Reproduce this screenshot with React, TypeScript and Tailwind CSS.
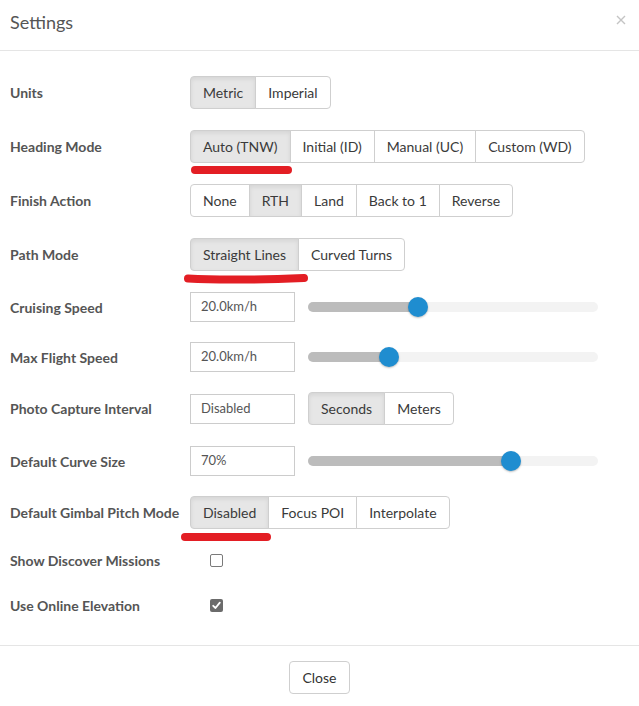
import React from "react";

const font = { fontFamily: "Lato, 'Open Sans', Arial, sans-serif" };

function Group({ items, active }: { items: string[]; active: number }) {
  return (
    <div className="flex h-[33px]">
      {items.map((item, i) => (
        <div
          key={item}
          className={`flex items-center px-3 border border-[#cfcfcf] text-[14px] text-[#3a3a3a] ${
            i > 0 ? "-ml-px" : ""
          } ${i === 0 ? "rounded-l-[4px]" : ""} ${i === items.length - 1 ? "rounded-r-[4px]" : ""} ${
            i === active ? "bg-[#e6e6e6] border-[#c2c2c2] shadow-[inset_0_2px_4px_rgba(0,0,0,0.08)] z-10" : "bg-white"
          }`}
        >
          {item}
        </div>
      ))}
    </div>
  );
}

function Field({ value }: { value: string }) {
  return (
    <div className="w-[105px] h-[30px] border border-[#cccccc] flex items-center pl-[10px] text-[13px] text-[#555] bg-white">
      {value}
    </div>
  );
}

function Slider({ pct }: { pct: number }) {
  return (
    <div className="relative w-[290px] h-[10px] rounded-full bg-[#f3f3f3] ml-[13px]">
      <div className="absolute left-0 top-0 h-full rounded-full bg-[#bcbcbc]" style={{ width: `${pct}%` }} />
      <div
        className="absolute top-1/2 w-[20px] h-[20px] -ml-[10px] -translate-y-1/2 rounded-full bg-[#1f8dd0] shadow-[0_1px_2px_rgba(0,0,0,0.25)]"
        style={{ left: `${pct}%` }}
      />
    </div>
  );
}

function Row({ label, className, children }: { label: string; className: string; children: React.ReactNode }) {
  return (
    <div className={`flex items-center ${className}`}>
      <div className="w-[190px] shrink-0 pl-[10px] text-[14px] font-bold text-[#555] whitespace-nowrap">{label}</div>
      <div className="flex items-center">{children}</div>
    </div>
  );
}

export default function App() {
  return (
    <div className="relative w-[639px] h-[706px] bg-white overflow-hidden" style={font}>
      {/* header */}
      <div className="h-[51px] border-b border-[#e5e5e5] flex items-center justify-between pl-[10px] pr-[13px]">
        <span className="text-[18px] text-[#555] -mt-[6px]">Settings</span>
        <svg width="10" height="10" viewBox="0 0 10 10" className="-mt-[10px]">
          <path d="M1 1L9 9M9 1L1 9" stroke="#c4c4c4" strokeWidth="1.4" />
        </svg>
      </div>

      {/* body */}
      <div className="pt-[25px] h-[595px] border-b border-[#e5e5e5]">
        <Row label="Units" className="h-[33px]">
          <Group items={["Metric", "Imperial"]} active={0} />
        </Row>
        <Row label="Heading Mode" className="h-[33px] mt-[21px]">
          <Group items={["Auto (TNW)", "Initial (ID)", "Manual (UC)", "Custom (WD)"]} active={0} />
        </Row>
        <Row label="Finish Action" className="h-[33px] mt-[21px]">
          <Group items={["None", "RTH", "Land", "Back to 1", "Reverse"]} active={1} />
        </Row>
        <Row label="Path Mode" className="h-[33px] mt-[21px]">
          <Group items={["Straight Lines", "Curved Turns"]} active={0} />
        </Row>
        <Row label="Cruising Speed" className="h-[30px] mt-[21px]">
          <Field value="20.0km/h" />
          <Slider pct={38} />
        </Row>
        <Row label="Max Flight Speed" className="h-[30px] mt-[20px]">
          <Field value="20.0km/h" />
          <Slider pct={28} />
        </Row>
        <Row label="Photo Capture Interval" className="h-[33px] mt-[20px]">
          <Field value="Disabled" />
          <div className="ml-[13px]">
            <Group items={["Seconds", "Meters"]} active={0} />
          </div>
        </Row>
        <Row label="Default Curve Size" className="h-[30px] mt-[21px]">
          <Field value="70%" />
          <Slider pct={70} />
        </Row>
        <Row label="Default Gimbal Pitch Mode" className="h-[33px] mt-[20px]">
          <Group items={["Disabled", "Focus POI", "Interpolate"]} active={0} />
        </Row>
        <Row label="Show Discover Missions" className="h-[21px] mt-[21px]">
          <div className="ml-[20px] w-[13px] h-[13px] rounded-[2px] border border-[#7a7a7a] bg-white" />
        </Row>
        <Row label="Use Online Elevation" className="h-[21px] mt-[24px]">
          <div className="ml-[20px] w-[13px] h-[13px] rounded-[2px] bg-[#6b6b6b] flex items-center justify-center">
            <svg width="9" height="9" viewBox="0 0 9 9">
              <path d="M1.2 4.8L3.5 7L7.8 1.6" stroke="#fff" strokeWidth="1.8" fill="none" strokeLinecap="round" strokeLinejoin="round" />
            </svg>
          </div>
        </Row>
      </div>

      {/* footer */}
      <div className="flex justify-center pt-[15px]">
        <div className="h-[33px] px-3 flex items-center border border-[#cfcfcf] rounded-[4px] text-[14px] text-[#333] bg-white">
          Close
        </div>
      </div>

      {/* red annotation marks */}
      <div className="absolute left-[191px] top-[166px] w-[101px] h-[8px] rounded-full bg-[#e31e24]" />
      <svg className="absolute left-[183px] top-[268px]" width="126" height="22" viewBox="0 0 126 22">
        <path d="M5 10.5C30 12 70 12 121 10" stroke="#e31e24" strokeWidth="8" strokeLinecap="round" fill="none" />
      </svg>
      <div className="absolute left-[181px] top-[533px] w-[90px] h-[8px] rounded-full bg-[#e31e24]" />
    </div>
  );
}
